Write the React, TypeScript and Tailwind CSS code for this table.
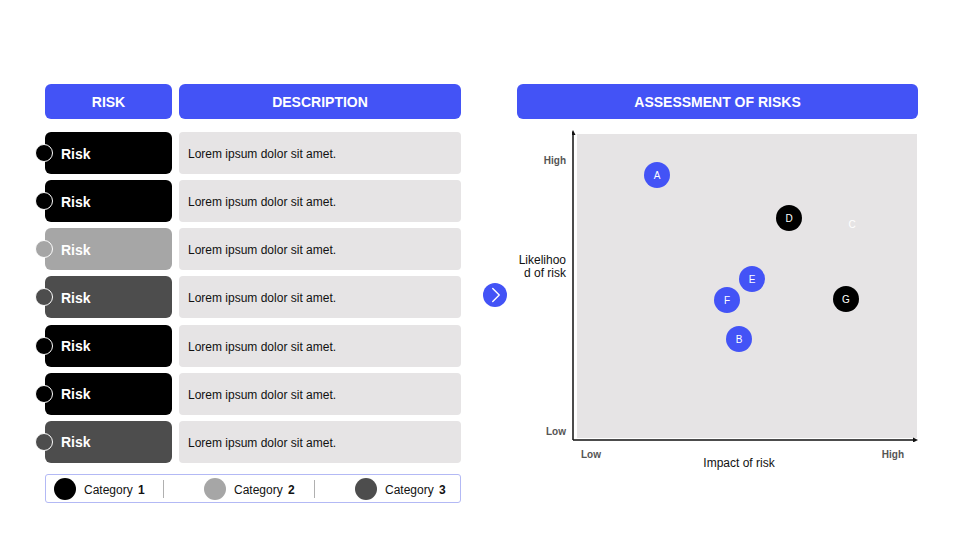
import { ChevronRight } from "lucide-react"

type Cat = 1 | 2 | 3

const rows: Cat[] = [1, 1, 2, 3, 1, 1, 3]

const catBg: Record<Cat, string> = {
  1: "bg-black",
  2: "bg-[#a6a6a6]",
  3: "bg-[#4d4d4d]",
}

interface Bubble {
  label: string
  left: number
  top: number
  kind: "blue" | "black" | "ghost"
}

// positions measured from the top-left of the grey plot area
const bubbles: Bubble[] = [
  { label: "A", left: 67, top: 28, kind: "blue" },
  { label: "D", left: 199, top: 71, kind: "black" },
  { label: "C", left: 262, top: 77, kind: "ghost" },
  { label: "E", left: 162, top: 132, kind: "blue" },
  { label: "F", left: 137, top: 153, kind: "blue" },
  { label: "B", left: 149, top: 192, kind: "blue" },
  { label: "G", left: 256, top: 152, kind: "black" },
]

const bubbleCls = {
  blue: "bg-[#4353f6] text-white",
  black: "bg-black text-white",
  ghost: "text-white",
}

function Header({ children, className }: { children: React.ReactNode; className: string }) {
  return (
    <div className={`h-[35px] pt-[2px] rounded-[6px] bg-[#4353f6] flex items-center justify-center text-white font-bold text-[14px] ${className}`}>
      {children}
    </div>
  )
}

function LegendItem({ cat }: { cat: Cat }) {
  return (
    <div className="flex items-center gap-[8px]">
      <div className={`w-[22px] h-[22px] rounded-full ${catBg[cat]}`} />
      <span className="pt-[2px] text-[12px] text-[#111]">
        Category <span className="font-bold ml-[2px]">{cat}</span>
      </span>
    </div>
  )
}

export default function App() {
  return (
    <div
      className="w-[960px] h-[540px] bg-white flex pt-[84px] pl-[45px]"
      style={{ fontFamily: '"Liberation Sans", Arial, sans-serif' }}
    >
      {/* left: risk table */}
      <div className="w-[416px] flex flex-col">
        <div className="flex gap-[7px]">
          <Header className="w-[127px]">RISK</Header>
          <Header className="flex-1">DESCRIPTION</Header>
        </div>

        <div className="mt-[13px] flex flex-col gap-[6.17px]">
          {rows.map((cat, i) => (
            <div key={i} className="flex gap-[7px] h-[42px]">
              <div className={`relative w-[127px] rounded-[6px] flex items-center pl-[16px] pt-[2px] ${catBg[cat]}`}>
                <div className={`absolute left-[-10px] top-[12px] w-[18px] h-[18px] rounded-full border-[1.5px] border-white ${catBg[cat]}`} />
                <span className="text-white font-bold text-[14px]">Risk</span>
              </div>
              <div className="flex-1 rounded-[4px] bg-[#e6e4e5] flex items-center pl-[9px] pt-[2px] text-[12px] text-[#111]">
                Lorem ipsum dolor sit amet.
              </div>
            </div>
          ))}
        </div>

        <div className="mt-[11px] h-[29px] pt-[1px] rounded-[3px] border border-[#b3b9f5] flex items-center pl-[8px]">
          <div className="w-[109px]">
            <LegendItem cat={1} />
          </div>
          <div className="w-px h-[18px] bg-[#b0b0b0]" />
          <div className="w-[150px] pl-[40px]">
            <LegendItem cat={2} />
          </div>
          <div className="w-px h-[18px] bg-[#b0b0b0]" />
          <div className="pl-[40px]">
            <LegendItem cat={3} />
          </div>
        </div>
      </div>

      {/* arrow */}
      <div className="w-[56px] pl-[22px] pt-[199px]">
        <div className="w-[24px] h-[24px] rounded-full bg-[#4353f6] flex items-center justify-center">
          <ChevronRight size={26} strokeWidth={1.3} className="text-white shrink-0 ml-[2px]" />
        </div>
      </div>

      {/* right: assessment chart */}
      <div className="w-[401px] flex flex-col">
        <Header className="w-full">ASSESSMENT OF RISKS</Header>

        <div className="mt-[11px] flex">
          {/* y labels */}
          <div className="w-[49px] h-[312px] flex flex-col items-end text-right">
            <span className="pt-[25px] text-[10px] leading-[12px] font-bold text-[#555]">High</span>
            <span className="mt-[87px] text-[12px] leading-[13px] text-[#111]">
              Likelihoo
              <br />d of risk
            </span>
            <span className="mt-auto mb-[4px] text-[10px] leading-[12px] font-bold text-[#555]">Low</span>
          </div>

          {/* plot */}
          <div className="relative ml-[6px] w-[346px] h-[312px] pl-[5px] pt-[4px]">
            <div className="relative w-[340px] h-[304px] bg-[#e6e4e5]">
              {bubbles.map((b) => (
                <div
                  key={b.label}
                  className={`absolute w-[26px] h-[26px] rounded-full flex items-center justify-center text-[10px] ${bubbleCls[b.kind]}`}
                  style={{ left: b.left, top: b.top }}
                >
                  {b.label}
                </div>
              ))}
            </div>
            <svg className="absolute left-0 top-0" width="346" height="312" viewBox="0 0 346 312">
              <line x1="1" y1="3" x2="1" y2="310" stroke="#111" strokeWidth="1.5" />
              <line x1="1" y1="310" x2="342" y2="310" stroke="#111" strokeWidth="1.5" />
              <path d="M1 0 L-1.5 5 L3.5 5 Z" fill="#111" />
              <path d="M346 310 L341 307.5 L341 312.5 Z" fill="#111" />
            </svg>
          </div>
        </div>

        <div className="ml-[55px] w-[346px] flex flex-col">
          <div className="flex justify-between pl-[9px] pr-[14px] text-[10px] leading-[12px] font-bold text-[#555] mt-[7px]">
            <span>Low</span>
            <span>High</span>
          </div>
          <div className="text-center pr-[12px] text-[12px] leading-[14px] text-[#111] -mt-[5px]">Impact of risk</div>
        </div>
      </div>
    </div>
  )
}
